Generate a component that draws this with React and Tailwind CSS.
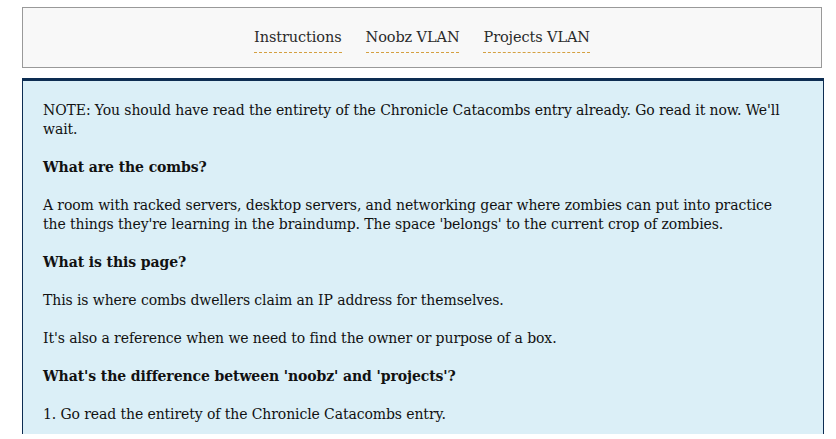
export default function App() {
  const serif = { fontFamily: '"DejaVu Serif", Georgia, serif' };
  return (
    <div className="min-h-[439px] bg-white pt-[7px]" style={serif}>
      <div className="ml-[22px] w-[800px] h-[61px] border border-[#999999] bg-[#f8f8f8] flex items-center justify-center gap-[24px] pt-[4px]">
        {["Instructions", "Noobz VLAN", "Projects VLAN"].map((t) => (
          <span key={t} className="text-[14.5px] leading-[20px] tracking-[-0.1px] text-[#2a2a2a] border-b border-dashed border-[#d4a040] pb-[5px]">
            {t}
          </span>
        ))}
      </div>
      <div className="ml-[22px] mt-[10px] w-[802px] border-x border-[#0d2d52] border-t-[3px] bg-[#dbeff7] pl-[20px] pr-[34px] pt-[20px] pb-[10px] text-[14px] leading-[19px] tracking-[-0.1px] text-[#111111]">
        <p>NOTE: You should have read the entirety of the Chronicle Catacombs entry already. Go read it now. We'll wait.</p>
        <p className="mt-[19px] font-bold">What are the combs?</p>
        <p className="mt-[19px]">A room with racked servers, desktop servers, and networking gear where zombies can put into practice the things they're learning in the braindump. The space 'belongs' to the current crop of zombies.</p>
        <p className="mt-[19px] font-bold">What is this page?</p>
        <p className="mt-[19px]">This is where combs dwellers claim an IP address for themselves.</p>
        <p className="mt-[19px]">It's also a reference when we need to find the owner or purpose of a box.</p>
        <p className="mt-[19px] font-bold">What's the difference between 'noobz' and 'projects'?</p>
        <p className="mt-[19px]">1. Go read the entirety of the Chronicle Catacombs entry.</p>
      </div>
    </div>
  );
}
